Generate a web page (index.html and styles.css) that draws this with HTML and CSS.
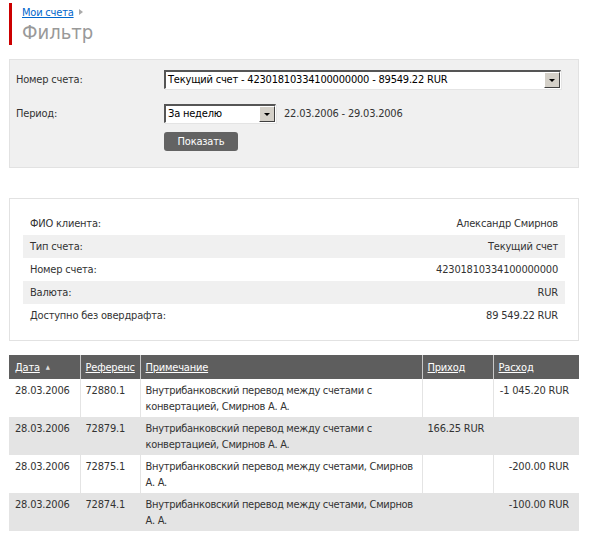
FILE: index.html
```html
<html>

<head>
    <link rel="stylesheet" href="styles.css">
    <title>Фильтр</title>
</head>

<body>
    <div class="page">
        <div class="head">
            <div class="crumbs"><a href="#">Мои счета</a><span class="crumb-arrow"></span></div>
            <h1>Фильтр</h1>
        </div>

        <div class="filter">
            <div class="field-label">Номер счета:</div>
            <div class="combo combo-wide">
                <span class="combo-text">Текущий счет - 42301810334100000000 - 89549.22 RUR</span>
                <span class="combo-btn"><span class="combo-arrow"></span></span>
            </div>

            <div class="field-label">Период:</div>
            <div class="period">
                <div class="combo combo-short">
                    <span class="combo-text">За неделю</span>
                    <span class="combo-btn"><span class="combo-arrow"></span></span>
                </div>
                <span class="range">22.03.2006 - 29.03.2006</span>
            </div>

            <div></div>
            <div><button class="btn">Показать</button></div>
        </div>

        <div class="info">
            <div class="info-row"><span>ФИО клиента:</span><span>Александр Смирнов</span></div>
            <div class="info-row"><span>Тип счета:</span><span>Текущий счет</span></div>
            <div class="info-row"><span>Номер счета:</span><span>42301810334100000000</span></div>
            <div class="info-row"><span>Валюта:</span><span>RUR</span></div>
            <div class="info-row"><span>Доступно без овердрафта:</span><span>89 549.22 RUR</span></div>
        </div>

        <table class="ops">
            <colgroup>
                <col class="c-date">
                <col class="c-ref">
                <col class="c-note">
                <col class="c-in">
                <col class="c-out">
            </colgroup>
            <thead>
                <tr>
                    <th><a href="#">Дата</a><span class="sort">▲</span></th>
                    <th><a href="#">Референс</a></th>
                    <th><a href="#">Примечание</a></th>
                    <th><a href="#">Приход</a></th>
                    <th><a href="#">Расход</a></th>
                </tr>
            </thead>
            <tbody>
                <tr>
                    <td>28.03.2006</td>
                    <td>72880.1</td>
                    <td class="note">Внутрибанковский перевод между счетами с конвертацией, Смирнов А. А.</td>
                    <td class="sum"></td>
                    <td class="sum out">-1 045.20 RUR</td>
                </tr>
                <tr>
                    <td>28.03.2006</td>
                    <td>72879.1</td>
                    <td class="note">Внутрибанковский перевод между счетами с конвертацией, Смирнов А. А.</td>
                    <td class="sum">166.25 RUR</td>
                    <td class="sum out"></td>
                </tr>
                <tr>
                    <td>28.03.2006</td>
                    <td>72875.1</td>
                    <td class="note">Внутрибанковский перевод между счетами, Смирнов А. А.</td>
                    <td class="sum"></td>
                    <td class="sum out">-200.00 RUR</td>
                </tr>
                <tr>
                    <td>28.03.2006</td>
                    <td>72874.1</td>
                    <td class="note">Внутрибанковский перевод между счетами, Смирнов А. А.</td>
                    <td class="sum"></td>
                    <td class="sum out">-100.00 RUR</td>
                </tr>
            </tbody>
        </table>
    </div>
</body>

</html>
```

FILE: styles.css
```css
body {
    margin: 0;
    font-family: "DejaVu Sans Condensed", "Liberation Sans", sans-serif;
    font-size: 11px;
    letter-spacing: -0.2px;
    color: #333;
    background: #fff;
}

.page {
    width: 570px;
    padding: 3px 0 0 9px;
}

/* header */

.head {
    border-left: 3px solid #cc0000;
    padding: 2px 0 1px 10px;
}

.crumbs {
    line-height: 15px;
}

.crumbs a {
    color: #0066cc;
}

.crumb-arrow {
    display: inline-block;
    margin-left: 5px;
    border-left: 4px solid #aaa;
    border-top: 3px solid transparent;
    border-bottom: 3px solid transparent;
    vertical-align: 1px;
}

h1 {
    margin: 0;
    font-size: 20px;
    font-weight: normal;
    line-height: 24px;
    letter-spacing: 0;
    color: #999;
}

/* filter */

.filter {
    margin-top: 14px;
    background: #f0f0f0;
    border: 1px solid #e2e2e2;
    padding: 10px 16px 16px 6px;
    display: grid;
    grid-template-columns: 148px 1fr;
    row-gap: 15px;
}

.filter .btn {
    margin-top: -6px;
}

.field-label {
    line-height: 19px;
}

.combo {
    display: flex;
    height: 19px;
    box-sizing: border-box;
    background: #fff;
    border-style: solid;
    border-width: 2px 1px 1px 2px;
    border-color: #555 #fff #fff #555;
    box-shadow: 1px 1px 0 #e4e4e4;
}

.combo-wide {
    width: 397px;
}

.combo-short {
    width: 112px;
}

.combo-text {
    flex: 1;
    padding-left: 2px;
    line-height: 15px;
    color: #000;
    white-space: nowrap;
    overflow: hidden;
}

.combo-btn {
    width: 16px;
    height: 16px;
    box-sizing: border-box;
    background: #d4d0c8;
    border-style: solid;
    border-width: 1px;
    border-color: #fff #404040 #404040 #fff;
    display: flex;
    align-items: center;
    justify-content: center;
}

.combo-arrow {
    border-top: 3px solid #000;
    border-left: 3px solid transparent;
    border-right: 3px solid transparent;
}

.period {
    display: flex;
    align-items: center;
    gap: 8px;
}

.range {
    line-height: 19px;
}

.btn {
    width: 74px;
    height: 19px;
    padding: 0;
    border: 0;
    border-radius: 3px;
    background: #636363;
    color: #fff;
    font-family: inherit;
    font-size: 11px;
    letter-spacing: inherit;
}

/* account info */

.info {
    margin-top: 30px;
    border: 1px solid #e2e2e2;
    padding: 13px;
}

.info-row {
    display: flex;
    justify-content: space-between;
    line-height: 23px;
    padding: 0 7px;
}

.info-row:nth-child(even) {
    background: #f0f0f0;
}

/* operations */

.ops {
    margin-top: 14px;
    width: 570px;
    border-collapse: collapse;
    table-layout: fixed;
    font-size: inherit;
    color: inherit;
}

.c-date { width: 71px; }
.c-ref { width: 60px; }
.c-note { width: 282px; }
.c-in { width: 71px; }
.c-out { width: 86px; }

.ops th {
    background: #5e5e5e;
    height: 24px;
    padding: 0 5px;
    text-align: left;
    font-weight: normal;
    border-left: 1px solid #c8c8c8;
}

.ops th a {
    color: #fff;
}

.sort {
    margin-left: 6px;
    font-size: 6px;
    color: #ddd;
    vertical-align: 2px;
}

.ops td {
    vertical-align: top;
    padding: 4px 5px 2px;
    line-height: 16px;
    border-left: 1px solid #e4e4e4;
}

.ops th:first-child,
.ops td:first-child {
    border-left: 0;
    padding-left: 6px;
}

.ops td.note {
    padding-right: 2px;
    letter-spacing: -0.3px;
}

.ops td.sum {
    white-space: nowrap;
}

.ops tbody tr {
    height: 37px;
}

.ops tbody tr:nth-child(even) {
    background: #e4e4e4;
}

.ops td.out {
    text-align: right;
    padding-right: 10px;
}
```
